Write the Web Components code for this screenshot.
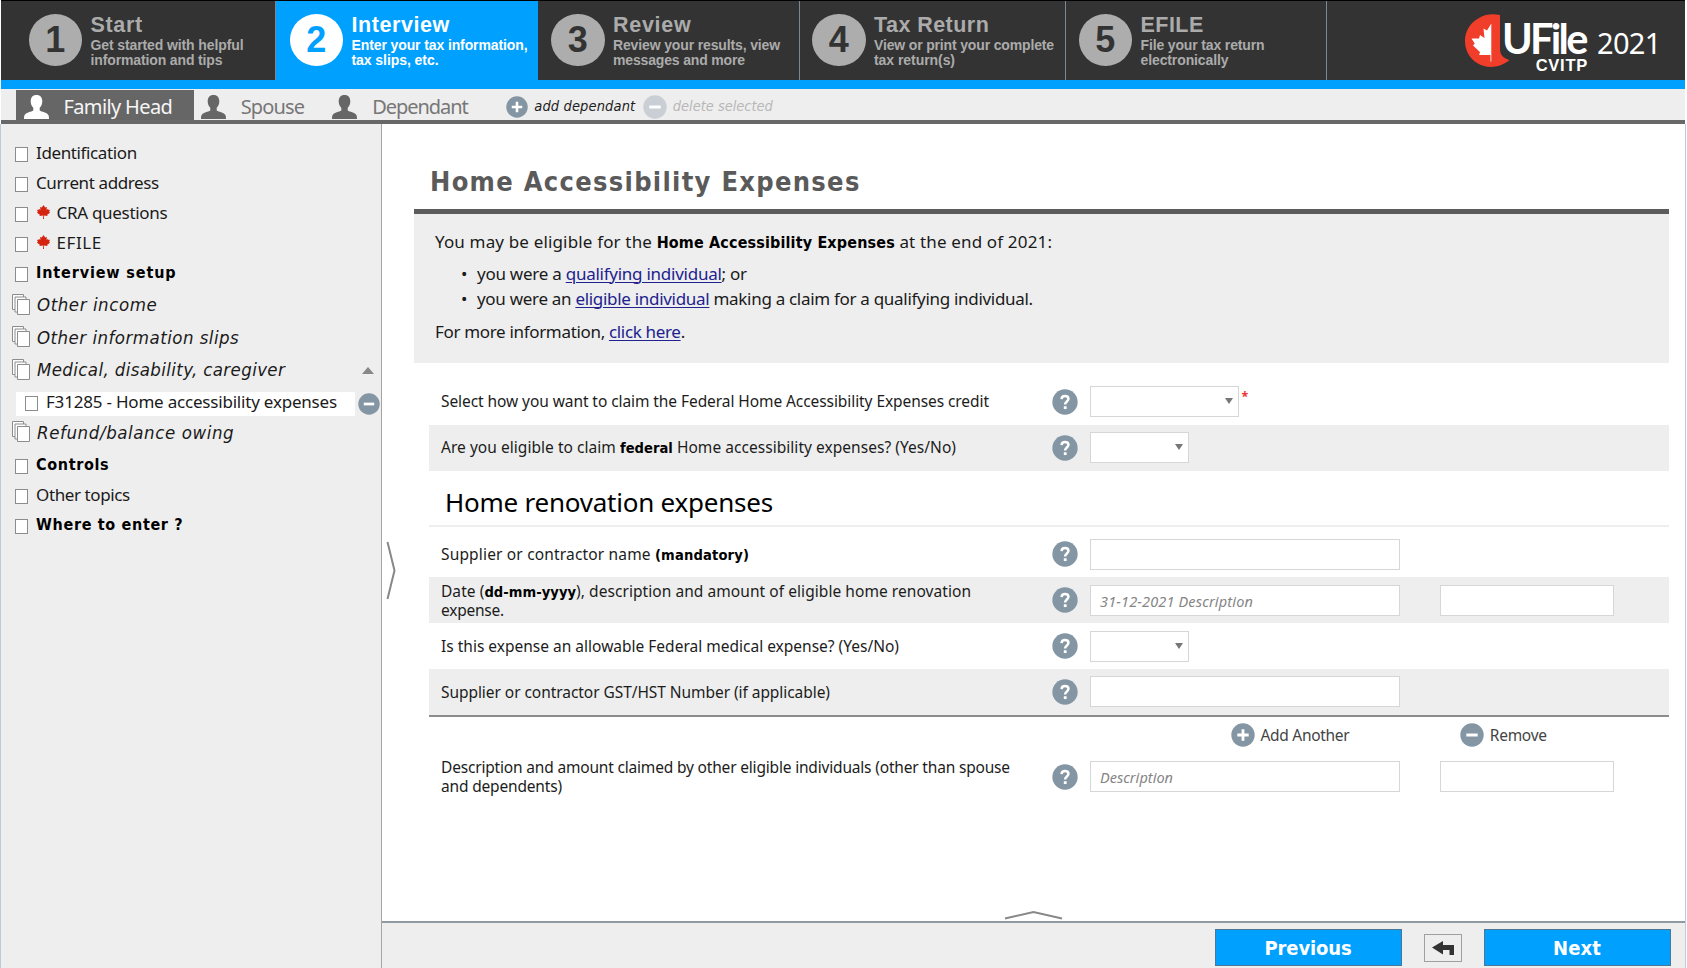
<!DOCTYPE html>
<html lang="en">
<head>
<meta charset="utf-8">
<title>UFile 2021 - Home Accessibility Expenses</title>
<style>
html,body{margin:0;height:100%;overflow:hidden;background:#fff}
body{font-family:"Noto Sans","Open Sans",sans-serif;color:#1c1c1c;--wide:"DejaVu Sans Condensed","DejaVu Sans","Noto Sans",sans-serif}
</style>
</head>
<body>
<uf-app></uf-app>
<script>
const define=(name,css,html,after)=>customElements.define(name,class extends HTMLElement{
  connectedCallback(){
    if(this.shadowRoot)return;
    const r=this.attachShadow({mode:'open'});
    r.innerHTML='<style>*,:host{box-sizing:border-box}b{font-family:var(--wide);font-size:.94em}'+css+'</style>'+(typeof html==='function'?html(this):html);
    if(after)after(this,r);
  }
});

/* Text tracked to occupy a given measure (attribute w, px). */
const fit=(host)=>{
  const w=+host.getAttribute('w');
  if(!w)return;
  const n=host.textContent.length;
  const nat=host.getBoundingClientRect().width;
  host.style.letterSpacing=((w-nat)/Math.max(1,n-.5)).toFixed(3)+'px';
};

define('uf-text',':host{display:inline-block;white-space:pre}','<slot></slot>',fit);

define('uf-person',':host{display:block;flex:none}svg{display:block;width:100%;height:100%}',
 '<svg viewBox="0 0 25 24" preserveAspectRatio="none" fill="currentColor"><path d="M12.500 0c-4 0-5.800 2.600-5.800 6.300 0 2.800 1 5 2.600 6.500v2.800c-2 1.500-7 1.800-8.500 4.200-.8 1.300-.8 2.700-.8 4.200h25c0-1.500 0-2.900-.8-4.200-1.500-2.400-6.500-2.700-8.500-4.200V12.800c1.600-1.500 2.600-3.700 2.600-6.500C18.300 2.600 16.500 0 12.500 0z"/></svg>');

define('uf-round',':host{display:block;flex:none;width:24px;height:24px;color:#8496a3}svg{display:block;width:100%;height:100%}',
 h=>'<svg viewBox="0 0 24 24"><circle cx="12" cy="12" r="11.700" fill="currentColor"/>'+
 ({plus:'<path d="M12 6.300v11.400M6.300 12h11.400" stroke="#fff" stroke-width="2.800"/>',
   minus:'<path d="M6.300 12h11.400" stroke="#fff" stroke-width="3"/>',
   help:'<path d="M8.800 9.300c.1-1.900 1.400-2.900 3.200-2.900 1.900 0 3.200 1.100 3.200 2.700 0 2.400-3.100 2.500-3.100 5.200" fill="none" stroke="#fff" stroke-width="2.300"/><rect x="10.900" y="15.900" width="2.600" height="2.600" fill="#fff"/>'})[h.getAttribute('kind')]+'</svg>');

define('uf-leaf',':host{display:block;flex:none;width:13px;height:14px;color:#d42410}svg{display:block;width:100%;height:100%}',
 '<svg viewBox="0 0 26 28" fill="currentColor"><path d="M13 0l3.400 5.200 3.400-1.200-.6 6 3-2.400.6 2.400L26 9.500l-1.600 4 1.600 1.800-5.600 4.200.6 2.500-7.300-.8.3 6.800h-2l.3-6.800-7.300.8.6-2.500L0 15.300l1.600-1.800-1.600-4 3.200.5.6-2.400 3 2.400-.6-6 3.400 1.200z"/></svg>');

define('uf-step',`
:host{display:flex;flex:none;height:79px;background:#333;color:#ababab;border-right:1px solid #7d8790;font-family:"Liberation Sans",Arial,sans-serif;font-weight:bold;padding-top:12.500px}
:host([active]){background:#00a0ff;color:#fff;border-right-color:#00a0ff}
.n{flex:none;width:53.500px;height:52px;border-radius:50%;background:#adadad;color:#333;font-size:36px;line-height:52px;text-align:center;margin-right:8.500px}
:host([active]) .n{background:#fff;color:#00a0ff}
.t{font-size:21.500px;line-height:22px;height:24px}
.s{font-size:14px;line-height:15px;white-space:nowrap}`,
 h=>{const a=k=>h.getAttribute(k),l=a('sub').split('|'),w=a('sw').split('|');
 return `<div class="n">${a('n')}</div><div class="c"><div class="t"><uf-text w="${a('tw')}">${a('name')}</uf-text></div>${l.map((x,i)=>`<div class="s"><uf-text w="${w[i]}">${x}</uf-text></div>`).join('')}</div>`});

define('uf-logo',`
:host{display:flex;font-family:Lato,sans-serif;color:#fff}
.mark{width:46px;height:54px;flex:none;margin-top:13px;display:block}
.brand{margin-left:-8px;width:87px;text-align:right;height:79px}
.u{font-size:41.500px;line-height:44px;height:42px;margin-top:14.500px;font-weight:700;text-align:left}
.c{font:bold 16.500px/14px "Liberation Sans",sans-serif;padding-right:1px}
.y{font:29px/40px "Noto Sans",sans-serif;margin:22px 0 0 8px}`,`
<svg class="mark" viewBox="0 0 46 54"><path d="M36 1C30 0 22-.5 15 4 6 9 1 17 1 27s5 18 13 22.500c9 5.500 22 4.500 31.500-3.500C39 44 36 41 36 35z" fill="#f03e2b"/><path d="M27 10l-4 6.500-3.500-2 1 9.500-4.500-3-1 3.500H7.500l3.200 5-1.700 2 7 6.500-.8 3H26.500v6.500h.8V10z" fill="#fff"/></svg>
<div class="brand"><div class="u"><uf-text w="85">UFile</uf-text></div><div class="c"><uf-text w="52">CVITP</uf-text></div></div>
<div class="y"><uf-text w="64">2021</uf-text></div>`);

define('uf-tab',`:host{display:flex;align-items:center;height:30px;color:#777;font-size:20px;line-height:26px}
:host([active]){background:#666;color:#f6f6f6}
uf-person{width:25px;height:24px;color:#666;margin-right:15px;margin-top:4px}
:host([active]) uf-person{color:#fff}
uf-text{margin-top:3px}`,h=>`<uf-person></uf-person><uf-text w="${h.getAttribute('w')}">${h.getAttribute('name')}</uf-text>`);

define('uf-item',`:host{display:flex;align-items:center;height:30px;padding-left:15px;font-size:17px;line-height:24px;color:#1a1a1a}
:host([bold]){font-weight:bold;color:#000;font-family:var(--wide);font-size:16px}
:host([group]){height:32.500px;padding-left:12px;font-family:var(--wide);font-size:18.500px;font-style:italic}
.b{flex:none;width:13px;height:15px;border:1px solid #8c8c8c;background:#fff;margin:2px 8px 0 0}
svg{flex:none;width:18px;height:21px;margin:-2px 7px 0 0}
uf-leaf{margin:-3px 6.500px 0 1px}
.a{margin-left:auto;margin-right:7px;width:0;border:6px solid transparent;border-top:0;border-bottom:7px solid #888}`,
 h=>(h.hasAttribute('group')?'<svg viewBox="0 0 18 21" fill="#fff" stroke="#8c8c8c"><path d="M.5.500h11v15H.5z"/><path d="M3 3h11v15H3z"/><path d="M5.500 5.500h12v15h-12z"/></svg>':'<span class="b"></span>')+
 (h.hasAttribute('leaf')?'<uf-leaf></uf-leaf>':'')+`<uf-text w="${h.getAttribute('w')}">${h.getAttribute('name')}</uf-text>`+(h.hasAttribute('open')?'<span class="a"></span>':''));

define('uf-side',`:host{display:block;width:382px;flex:none;background:#eee;border-right:1px solid #a5a5a5;padding-top:14px;border-left:1px solid #bccbdc}
nav{margin-left:-1px}
.g{margin-top:1px}.sel{display:flex;align-items:center;margin:5px 0 1px 16px;height:24px}
.sel uf-item{height:24px;width:339px;background:#fff;padding-left:9px;padding-bottom:3px;margin-right:2.500px}
.sel uf-round{width:22px;height:22px}`,`<nav>
<uf-item name="Identification" w="101"></uf-item>
<uf-item name="Current address" w="123"></uf-item>
<uf-item name="CRA questions" w="111" leaf></uf-item>
<uf-item name="EFILE" w="45" leaf></uf-item>
<uf-item name="Interview setup" w="140" bold></uf-item>
<div class="g"><uf-item name="Other income" w="120" group></uf-item>
<uf-item name="Other information slips" w="202" group></uf-item>
<uf-item name="Medical, disability, caregiver" w="248" group open></uf-item></div>
<div class="sel"><uf-item name="F31285 - Home accessibility expenses" w="291"></uf-item><uf-round kind="minus"></uf-round></div>
<uf-item name="Refund/balance owing" w="197" group></uf-item>
<uf-item style="margin-top:1px" name="Controls" w="73" bold></uf-item>
<uf-item name="Other topics" w="94" ></uf-item>
<uf-item name="Where to enter ?" w="147" bold></uf-item></nav>`);

define('uf-field',`:host{display:flex;align-items:center;height:31px;border:1px solid #d6d6d6;background:#fff;padding:2px 9px 0;font-size:14.500px;font-style:italic;color:#858585;flex:none}
.a{margin-left:auto;margin-right:-3.500px;margin-top:-3px;border:4px solid transparent;border-bottom:0;border-top:6px solid #777}`,
 h=>'<slot></slot>'+(h.hasAttribute('select')?'<span class="a"></span>':''),h=>{h.style.width=h.getAttribute('width')+'px'});

define('uf-row',`:host{display:grid;grid-template-columns:611px 38px 350px 1fr;align-items:center;height:46px;padding-left:12.500px;font-size:15.500px;line-height:19px}
:host([alt]){background:#eee}
uf-round{width:26px;height:26px}.f{display:flex}.l{padding-bottom:1px}
:host([low]) .l{padding:1px 0 0}`,
 '<div class="l"><slot name="label"></slot></div><uf-round kind="help"></uf-round><div class="f"><slot></slot></div><div class="f"><slot name="extra"></slot></div>');

define('uf-info',`:host{display:block;height:154px;border-top:5px solid #5c5c5c;background:#eee;padding:15px 21px;font-size:17px;line-height:25px;color:#1a1a1a}
a{color:#21218f;text-decoration:underline;text-underline-offset:2px;text-decoration-thickness:1px}
b{color:#000}p{margin:0;height:25px}ul{list-style:none;margin:6.500px 0 8px;padding:0 0 0 26px}li{display:flex;height:25px}li::before{content:"•";width:16px}`,`
<p><uf-text w="617">You may be eligible for the <b>Home Accessibility Expenses</b> at the end of 2021:</uf-text></p>
<ul><li><uf-text w="270">you were a <a>qualifying individual</a>; or</uf-text></li>
<li><uf-text w="556">you were an <a>eligible individual</a> making a claim for a qualifying individual.</uf-text></li></ul>
<p><uf-text w="250">For more information, <a>click here</a>.</uf-text></p>`);

define('uf-form',`:host{display:block;padding:15.500px 0 0 14.500px}
h2{font-size:26px;font-weight:normal;line-height:36px;margin:0;height:56px;padding:13px 0 0 16.500px;border-bottom:2px solid #eee;color:#000}
.gap{height:4.500px}i{color:#e33;font:bold 12.500px/14px "Noto Sans";margin:4px 0 0 2.500px}
b{color:#000}.end{border-bottom:2px solid #8c8c8c;height:47.500px}
.act{display:flex;height:37px;align-items:center;color:#444;font-size:15.500px;padding-left:802.500px}
.act uf-round{margin-right:5.500px}.act uf-text{flex:none}`,`
<uf-row><span slot="label"><uf-text w="548">Select how you want to claim the Federal Home Accessibility Expenses credit</uf-text></span><uf-field width="149" select></uf-field><i>*</i></uf-row>
<uf-row alt><span slot="label"><uf-text w="515">Are you eligible to claim <b>federal</b> Home accessibility expenses? (Yes/No)</uf-text></span><uf-field width="99" select></uf-field></uf-row>
<h2><uf-text w="328">Home renovation expenses</uf-text></h2><div class="gap"></div>
<uf-row low><span slot="label"><uf-text w="308">Supplier or contractor name <b>(mandatory)</b></uf-text></span><uf-field width="310"></uf-field></uf-row>
<uf-row low alt><span slot="label"><uf-text w="530">Date (<b>dd-mm-yyyy</b>), description and amount of eligible home renovation</uf-text><br><uf-text w="63">expense.</uf-text></span><uf-field width="310"><uf-text w="153">31-12-2021 Description</uf-text></uf-field><uf-field slot="extra" width="174"></uf-field></uf-row>
<uf-row low><span slot="label"><uf-text w="458">Is this expense an allowable Federal medical expense? (Yes/No)</uf-text></span><uf-field width="99" select></uf-field></uf-row>
<uf-row low alt class="end"><span slot="label"><uf-text w="389">Supplier or contractor GST/HST Number (if applicable)</uf-text></span><uf-field width="310"></uf-field></uf-row>
<div class="act"><uf-round kind="plus"></uf-round><uf-text w="89">Add Another</uf-text><uf-round kind="minus" style="margin-left:111px"></uf-round><uf-text w="57">Remove</uf-text></div>
<uf-row low><span slot="label"><uf-text w="569">Description and amount claimed by other eligible individuals (other than spouse</uf-text><br><uf-text w="121">and dependents)</uf-text></span><uf-field width="310"><uf-text w="73">Description</uf-text></uf-field><uf-field slot="extra" width="174"></uf-field></uf-row>`);

define('uf-button',':host{display:block;width:187px;height:37px;background:#00a0ff;border:1px solid #4d7796;color:#fff;font-family:var(--wide);font-weight:bold;font-size:20px;line-height:36px;text-align:center}','<slot></slot>');

define('uf-footer',`:host{display:flex;height:47px;background:#eee;border-top:2px solid #929aa1;padding:6px 14.500px 0 0;justify-content:flex-end}
.r{width:38px;height:28px;border:1px solid #a0a0a0;margin:5px 22px 0;display:flex;align-items:center;justify-content:center}svg{width:22px;height:17px}`,`
<uf-button><uf-text w="87">Previous</uf-text></uf-button>
<div class="r"><svg viewBox="0 0 22 17" fill="#333"><path d="M0 7.500L11 1v4h11v10h-4.500v-5H11v4.500z"/></svg></div>
<uf-button><uf-text w="48">Next</uf-text></uf-button>`);

define('uf-app',`:host{display:flex;flex-direction:column;width:1687px;height:968px;position:relative}
header{display:flex;height:80px;background:#333;border-top:1px solid #000;margin:0 2px 0 1px;flex:none}
.blue{height:9px;background:#00a0ff;margin:0 2px 0 1px;flex:none}
.tabs{display:flex;height:35px;background:#eee;border-bottom:4px solid #686868;margin:0 2px 0 1px;padding:1px 0 0 15px;flex:none;font-family:var(--wide);font-size:14.500px;font-style:italic;align-items:center}
.tabs uf-tab{font-style:normal;font-family:"Noto Sans",sans-serif}.tabs>uf-text{margin-top:2px}
.body{display:flex;flex:1;min-height:0}
main{flex:1;display:flex;flex-direction:column;border-right:1px solid #c3cbd8;margin-right:1px;background:#fff}
.page{flex:1;padding:0 16.500px 0 32px}
h1{margin:0;font-family:var(--wide);font-size:27px;line-height:40px;height:85px;padding:38px 0 0 16px;color:#5a5a5a}
.v,.h{position:absolute;fill:none;stroke:#888;stroke-width:2}
.v{left:386px;top:541px;width:10px;height:59px}.h{left:1004px;top:910px;width:59px;height:10px}
uf-logo{margin-left:137px}`,`
<header>
<uf-step n="1" name="Start" tw="52" sub="Get started with helpful|information and tips" sw="153|132" style="width:275px;padding-left:27.500px"></uf-step>
<uf-step active n="2" name="Interview" tw="98" sub="Enter your tax information,|tax slips, etc." sw="176|87" style="width:262px;padding-left:13.500px"></uf-step>
<uf-step n="3" name="Review" tw="78" sub="Review your results, view|messages and more" sw="167|132" style="width:261.500px;padding-left:13px"></uf-step>
<uf-step n="4" name="Tax Return" tw="115" sub="View or print your complete|tax return(s)" sw="180|81" style="width:266.500px;padding-left:12.500px"></uf-step>
<uf-step n="5" name="EFILE" tw="63" sub="File your tax return|electronically" sw="124|88" style="width:261px;padding-left:12.500px"></uf-step>
<uf-logo></uf-logo>
</header>
<div class="blue"></div>
<div class="tabs">
<uf-tab active name="Family Head" w="109" style="padding:0 21.500px 0 7.500px"></uf-tab>
<uf-tab name="Spouse" w="64" style="padding-left:7px"></uf-tab>
<uf-tab name="Dependant" w="96" style="padding-left:28px"></uf-tab>
<uf-round kind="plus" style="width:22px;height:22px;margin:3px 6px 0 38.500px"></uf-round><uf-text w="101">add dependant</uf-text>
<uf-round kind="minus" style="margin:3px 6px 0 7.500px;color:#c9cfd4"></uf-round><uf-text w="100" style="color:#b8b8b8">delete selected</uf-text>
</div>
<div class="body"><uf-side></uf-side>
<main><div class="page"><h1><uf-text w="430">Home Accessibility Expenses</uf-text></h1><uf-info></uf-info><uf-form></uf-form></div><uf-footer></uf-footer></main></div>
<svg class="v" viewBox="0 0 10 59"><path d="M1.500 1L8.500 29.500L1.500 58"/></svg>
<svg class="h" viewBox="0 0 59 10"><path d="M1 8.500L29.500 2L58 8.500"/></svg>`);
</script>
</body>
</html>
